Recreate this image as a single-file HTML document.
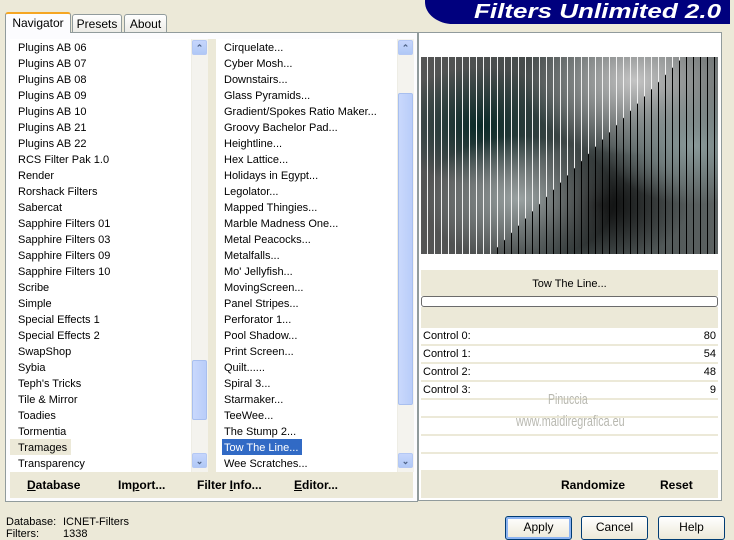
<!DOCTYPE html><html><head><style>
body{margin:0;width:734px;height:538px;background:#ece9d8;font-family:"Liberation Sans",sans-serif;font-size:11px;color:#000;position:relative;overflow:hidden}
.a{position:absolute}
.list{background:#fff}
.list div{height:16px;line-height:18px;padding-left:8px;white-space:nowrap}
.sb{background:#f4f3ee;border-left:1px solid #eeede5}
.arr{position:absolute;left:0;width:15px;height:15px;background:linear-gradient(#c6d6fc,#b0c8f6);border:1px solid #b4c8f4;border-radius:2px;box-sizing:border-box;color:#4d6185;font-size:9px;text-align:center;line-height:14px;font-weight:bold}
.thumb{position:absolute;left:0;width:15px;background:linear-gradient(90deg,#c9d8fc,#b9cdf9);border:1px solid #a8bfef;border-radius:2px;box-sizing:border-box}
.btn{position:absolute;top:516px;height:24px;border:1px solid #003c74;border-radius:3px;background:linear-gradient(#fff,#ece9d8);box-sizing:border-box;text-align:center;line-height:21px;font-size:12px}
.row{position:absolute;left:421px;width:297px;height:16px;background:#fff;line-height:16px}
.row span{position:absolute}
b.t{position:absolute;font-size:12px;top:478px}
</style></head><body>
<div class="a" style="left:425px;top:0;width:305px;height:24px;background:#00007e;border-bottom-left-radius:28px 22px"></div>
<div class="a" style="left:474px;top:1px;color:#fff;font-weight:bold;font-style:italic;font-size:20px;transform:scaleX(1.3);transform-origin:left;white-space:nowrap">Filters Unlimited 2.0</div>
<div class="a" style="left:5px;top:32px;width:413px;height:470px;border:1px solid #919b9c;background:#fcfcfe;box-sizing:border-box"></div>
<div class="a" style="left:5px;top:12px;width:66px;height:21px;background:#fcfcfe;border:1px solid #919b9c;border-bottom:none;border-top:2px solid #f5a623;border-radius:3px 3px 0 0;text-align:center;line-height:19px;font-size:12px;box-sizing:border-box">Navigator</div>
<div class="a" style="left:72px;top:14px;width:50px;height:18px;background:linear-gradient(#fff,#ecebe6);border:1px solid #919b9c;border-bottom:none;border-radius:3px 3px 0 0;text-align:center;line-height:18px;font-size:12px;box-sizing:border-box">Presets</div>
<div class="a" style="left:124px;top:14px;width:43px;height:18px;background:linear-gradient(#fff,#ecebe6);border:1px solid #919b9c;border-bottom:none;border-radius:3px 3px 0 0;text-align:center;line-height:18px;font-size:12px;box-sizing:border-box">About</div>
<div class="a list" style="left:10px;top:39px;width:181px;height:433px">
<div>Plugins AB 06</div><div>Plugins AB 07</div><div>Plugins AB 08</div><div>Plugins AB 09</div><div>Plugins AB 10</div><div>Plugins AB 21</div><div>Plugins AB 22</div><div>RCS Filter Pak 1.0</div><div>Render</div><div>Rorshack Filters</div><div>Sabercat</div><div>Sapphire Filters 01</div><div>Sapphire Filters 03</div><div>Sapphire Filters 09</div><div>Sapphire Filters 10</div><div>Scribe</div><div>Simple</div><div>Special Effects 1</div><div>Special Effects 2</div><div>SwapShop</div><div>Sybia</div><div>Teph's Tricks</div><div>Tile &amp; Mirror</div><div>Toadies</div><div>Tormentia</div><div><span style="background:#ece9d8;padding:0 4px 0 8px;margin-left:-8px;display:inline-block;height:16px">Tramages</span></div><div>Transparency</div></div>
<div class="a sb" style="left:191px;top:39px;width:16px;height:433px">
<div class="arr" style="top:1px">&#8963;</div><div class="thumb" style="top:321px;height:60px"></div><div class="arr" style="top:414px">&#8964;</div></div>
<div class="a" style="left:208px;top:39px;width:8px;height:433px;background:#ece9d8"></div>
<div class="a list" style="left:216px;top:39px;width:181px;height:433px">
<div>Cirquelate...</div><div>Cyber Mosh...</div><div>Downstairs...</div><div>Glass Pyramids...</div><div>Gradient/Spokes Ratio Maker...</div><div>Groovy Bachelor Pad...</div><div>Heightline...</div><div>Hex Lattice...</div><div>Holidays in Egypt...</div><div>Legolator...</div><div>Mapped Thingies...</div><div>Marble Madness One...</div><div>Metal Peacocks...</div><div>Metalfalls...</div><div>Mo' Jellyfish...</div><div>MovingScreen...</div><div>Panel Stripes...</div><div>Perforator 1...</div><div>Pool Shadow...</div><div>Print Screen...</div><div>Quilt......</div><div>Spiral 3...</div><div>Starmaker...</div><div>TeeWee...</div><div>The Stump 2...</div><div><span style="background:#316ac5;color:#fff;padding:0 4px 0 2px;margin-left:-2px;display:inline-block;height:16px">Tow The Line...</span></div><div>Wee Scratches...</div></div>
<div class="a sb" style="left:397px;top:39px;width:16px;height:433px">
<div class="arr" style="top:1px">&#8963;</div><div class="thumb" style="top:54px;height:312px"></div><div class="arr" style="top:414px">&#8964;</div></div>
<div class="a" style="left:10px;top:472px;width:403px;height:26px;background:#ece9d8"></div>
<b class="t" style="left:27px"><u>D</u>atabase</b>
<b class="t" style="left:118px">Im<u>p</u>ort...</b>
<b class="t" style="left:197px">Filter <u>I</u>nfo...</b>
<b class="t" style="left:294px"><u>E</u>ditor...</b>
<div class="a" style="left:418px;top:32px;width:304px;height:469px;border:1px solid #919b9c;background:#fff;box-sizing:border-box"></div>
<svg class="a" style="left:421px;top:57px" width="297" height="197">
<defs>
<linearGradient id="g0" x1="0" y1="0" x2="1" y2="0"><stop offset="0" stop-color="#555"/><stop offset="0.5" stop-color="#3e4646"/><stop offset="1" stop-color="#5c6262"/></linearGradient>
<radialGradient id="r1" cx="0.33" cy="0.72" r="0.32"><stop offset="0" stop-color="#9aa2a2"/><stop offset="1" stop-color="#9aa2a2" stop-opacity="0"/></radialGradient>
<radialGradient id="r2" cx="0.72" cy="0.12" r="0.38"><stop offset="0" stop-color="#c4c4c4"/><stop offset="1" stop-color="#c4c4c4" stop-opacity="0"/></radialGradient>
<radialGradient id="r3" cx="0.92" cy="0.45" r="0.3"><stop offset="0" stop-color="#8a9a9a"/><stop offset="1" stop-color="#8a9a9a" stop-opacity="0"/></radialGradient>
<radialGradient id="r4" cx="0.2" cy="0.35" r="0.3"><stop offset="0" stop-color="#0a2a28"/><stop offset="1" stop-color="#0a2a28" stop-opacity="0"/></radialGradient>
<radialGradient id="r5" cx="0.6" cy="0.75" r="0.3"><stop offset="0" stop-color="#0a0a0a"/><stop offset="1" stop-color="#0a0a0a" stop-opacity="0"/></radialGradient>
<pattern id="pw" width="7" height="197" patternUnits="userSpaceOnUse"><rect x="6" width="1" height="197" fill="#f0f0f0"/></pattern>
<pattern id="pb" width="7" height="197" patternUnits="userSpaceOnUse"><rect x="6" width="1" height="197" fill="#000"/></pattern>
</defs>
<rect width="297" height="197" fill="url(#g0)"/>
<rect width="297" height="197" fill="url(#r4)"/>
<rect width="297" height="197" fill="url(#r5)"/>
<rect width="297" height="197" fill="url(#r1)"/>
<rect width="297" height="197" fill="url(#r2)"/>
<rect width="297" height="197" fill="url(#r3)"/>
<polygon points="0,0 262,0 70,197 0,197" fill="url(#pw)"/>
<polygon points="262,0 297,0 297,197 70,197" fill="url(#pb)"/>
</svg>
<div class="a" style="left:421px;top:270px;width:297px;height:26px;background:#ece9d8;text-align:center;line-height:28px;font-size:11px">Tow The Line...</div>
<div class="a" style="left:421px;top:296px;width:297px;height:11px;border:1px solid #6b6b6b;border-radius:3px;background:#fff;box-sizing:border-box"></div>
<div class="a" style="left:421px;top:307px;width:297px;height:163px;background:#ece9d8"></div>
<div class="row" style="top:328px"><span style="left:2px">Control 0:</span><span style="right:2px">80</span></div>
<div class="row" style="top:346px"><span style="left:2px">Control 1:</span><span style="right:2px">54</span></div>
<div class="row" style="top:364px"><span style="left:2px">Control 2:</span><span style="right:2px">48</span></div>
<div class="row" style="top:382px"><span style="left:2px">Control 3:</span><span style="right:2px">9</span></div>
<div class="row" style="top:400px"></div><div class="row" style="top:418px"></div><div class="row" style="top:436px"></div><div class="row" style="top:454px"></div>
<div class="a" style="left:548px;top:391px;color:#b8b8b0;font-size:15px;transform:scaleX(0.7);transform-origin:left">Pinuccia</div>
<div class="a" style="left:516px;top:413px;color:#b8b8b0;font-size:15px;transform:scaleX(0.72);transform-origin:left">www.maidiregrafica.eu</div>
<div class="a" style="left:421px;top:470px;width:297px;height:28px;background:#ece9d8"></div>
<b class="t" style="left:561px">Randomize</b>
<b class="t" style="left:660px">Reset</b>
<div class="a" style="left:6px;top:516px;line-height:12px">Database:<br>Filters:</div>
<div class="a" style="left:63px;top:516px;line-height:12px">ICNET-Filters<br>1338</div>
<div class="btn" style="left:505px;width:67px;border-color:#003c74;box-shadow:inset 0 0 0 2px #8cb4f2">Apply</div>
<div class="btn" style="left:581px;width:67px">Cancel</div>
<div class="btn" style="left:658px;width:67px">Help</div>
</body></html>
